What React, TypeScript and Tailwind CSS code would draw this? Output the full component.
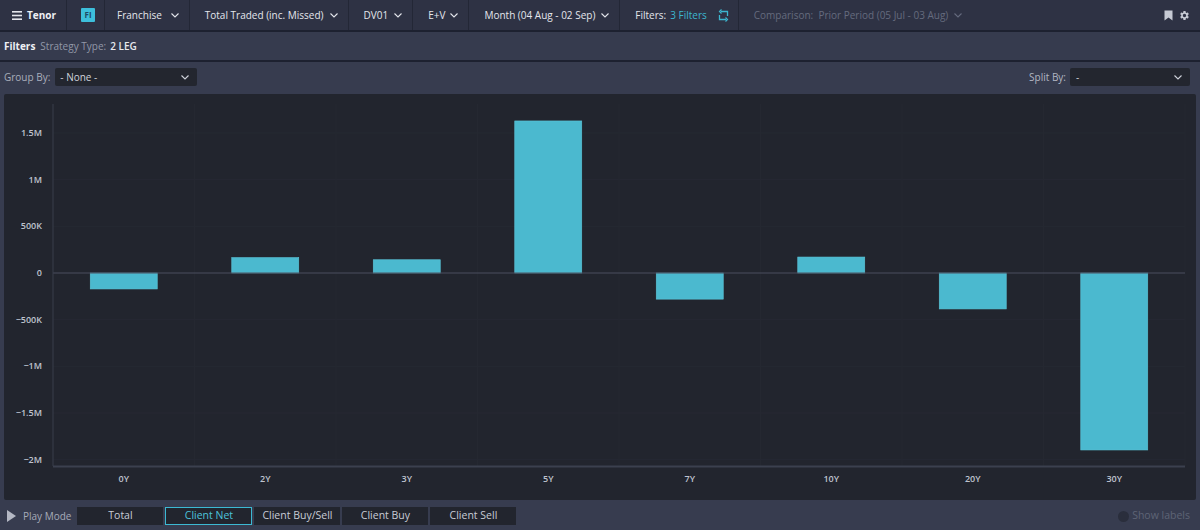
import React from "react";

const Chevron = ({ className = "" }: { className?: string }) => (
  <svg width="8" height="5" viewBox="0 0 8 5" className={className}>
    <polyline points="0.5,0.5 4,4 7.5,0.5" fill="none" stroke="currentColor" strokeWidth="1.1" />
  </svg>
);

const Sep = () => <div className="w-px self-stretch bg-[#232736]" />;

const data: { label: string; v: number }[] = [
  { label: "0Y", v: -171 },
  { label: "2Y", v: 165 },
  { label: "3Y", v: 142 },
  { label: "5Y", v: 1629 },
  { label: "7Y", v: -280 },
  { label: "10Y", v: 171 },
  { label: "20Y", v: -385 },
  { label: "30Y", v: -1896 },
];

const ticks: { label: string; v: number }[] = [
  { label: "1.5M", v: 1500 },
  { label: "1M", v: 1000 },
  { label: "500K", v: 500 },
  { label: "0", v: 0 },
  { label: "\u2212500K", v: -500 },
  { label: "\u22121M", v: -1000 },
  { label: "\u22121.5M", v: -1500 },
  { label: "\u22122M", v: -2000 },
];

function Chart() {
  const left = 49;
  const right = 1181;
  const zeroY = 179;
  const k = 46.67 / 500;
  const catW = (right - left) / 8;
  const barW = 67;
  const y = (v: number) => zeroY - v * k;
  return (
    <svg width="1192" height="406" viewBox="0 0 1192 406" className="block">
      {ticks.map((t) =>
        t.v !== 0 ? (
          <line key={"g" + t.label} x1={left} x2={right} y1={y(t.v)} y2={y(t.v)} stroke="#262933" strokeWidth="1" />
        ) : null
      )}
      {Array.from({ length: 8 }).map((_, i) => (
        <line key={"v" + i} x1={left + catW * (i + 1)} x2={left + catW * (i + 1)} y1={10} y2={372} stroke="#252831" strokeWidth="1" />
      ))}
      {data.map((d, i) => {
        const x = left + catW * i + (catW - barW) / 2;
        const top = d.v >= 0 ? y(d.v) : zeroY;
        const h = Math.abs(d.v * k);
        return <rect key={d.label} x={x} y={top} width={barW} height={h} fill="#4bb9cf" stroke="#5cc6da" strokeWidth="0.6" />;
      })}
      <line x1={left} x2={right} y1={zeroY} y2={zeroY} stroke="#4a4f5e" strokeWidth="1" />
      <line x1={left} x2={left} y1={10} y2={372} stroke="#393e4b" strokeWidth="1" />
      <line x1={left} x2={right} y1={372.5} y2={372.5} stroke="#3b404e" strokeWidth="2" />
      {ticks.map((t) => (
        <text key={t.label} x={38} y={y(t.v) + 3} textAnchor="end" fontSize="9" fontWeight="600" fill="#bfc3cf" fontFamily="'Open Sans', sans-serif">
          {t.label}
        </text>
      ))}
      {data.map((d, i) => (
        <text key={"x" + d.label} x={left + catW * i + catW / 2} y={388} textAnchor="middle" fontSize="9" fontWeight="600" fill="#bfc3cf" fontFamily="'Open Sans', sans-serif">
          {d.label}
        </text>
      ))}
    </svg>
  );
}

export default function App() {
  return (
    <div className="w-[1200px] h-[530px] overflow-hidden bg-[#373c4f] font-['Open_Sans',sans-serif] text-[10px] text-[#e4e6ec] flex flex-col">
      {/* top bar */}
      <div className="h-[32px] shrink-0 bg-[#2e3244] border-b-2 border-[#1d2130] flex items-stretch">
        <div className="flex items-center pl-[12px] pr-[10px] gap-[5px]">
          <svg width="10" height="9" viewBox="0 0 10 9">
            <rect x="0" y="0" width="10" height="1.6" fill="#e4e6ec" />
            <rect x="0" y="3.7" width="10" height="1.6" fill="#e4e6ec" />
            <rect x="0" y="7.4" width="10" height="1.6" fill="#e4e6ec" />
          </svg>
          <span className="font-bold text-[10px] text-[#eef0f4]">Tenor</span>
        </div>
        <Sep />
        <div className="flex items-center pl-[14px] pr-[9px]">
          <div className="w-[14px] h-[14px] bg-[#3dbfdb] rounded-[1px] flex items-center justify-center text-[8px] font-bold text-[#1e4a66] leading-none">FI</div>
        </div>
        <Sep />
        <div className="flex items-center pl-[12px] pr-[10px] gap-[9px]">
          <span>Franchise</span>
          <Chevron />
        </div>
        <Sep />
        <div className="flex items-center pl-[15px] pr-[10px] gap-[6px]">
          <span>Total Traded (inc. Missed)</span>
          <Chevron />
        </div>
        <Sep />
        <div className="flex items-center pl-[15px] pr-[10px] gap-[6px]">
          <span>DV01</span>
          <Chevron />
        </div>
        <Sep />
        <div className="flex items-center pl-[15px] pr-[10px] gap-[5px]">
          <span>E+V</span>
          <Chevron />
        </div>
        <Sep />
        <div className="flex items-center pl-[15px] pr-[10px] gap-[6px]">
          <span>Month (04 Aug - 02 Sep)</span>
          <Chevron />
        </div>
        <Sep />
        <div className="flex items-center pl-[15px] pr-[8px]">
          <span>Filters:</span>
          <span className="ml-[4px] text-[#3db6cf]">3 Filters</span>
          <svg width="13" height="13" viewBox="0 0 13 13" className="ml-[10px]">
            <path d="M4 2.5 H10.5 V7" fill="none" stroke="#3db6cf" strokeWidth="1.3" />
            <path d="M9 10.5 H2.5 V6" fill="none" stroke="#3db6cf" strokeWidth="1.3" />
            <path d="M4.5 0.5 L2.5 2.5 L4.5 4.5" fill="none" stroke="#3db6cf" strokeWidth="1.2" />
            <path d="M8.5 8.5 L10.5 10.5 L8.5 12.5" fill="none" stroke="#3db6cf" strokeWidth="1.2" />
          </svg>
        </div>
        <Sep />
        <div className="flex items-center pl-[15px] gap-[6px] text-[#656b7e]">
          <span>Comparison:&nbsp; Prior Period (05 Jul - 03 Aug)</span>
          <Chevron />
        </div>
        <div className="flex-1" />
        <div className="flex items-center gap-[6px] pr-[10px]">
          <svg width="9" height="11" viewBox="0 0 9 11">
            <path d="M0.5 0.5 H8.5 V10.5 L4.5 7.5 L0.5 10.5 Z" fill="#c6cad4" />
          </svg>
          <svg width="11" height="11" viewBox="0 0 24 24">
            <path
              fill="#c6cad4"
              d="M19.14 12.94c.04-.3.06-.61.06-.94 0-.32-.02-.64-.07-.94l2.030-1.58a.49.49 0 0 0 .12-.61l-1.92-3.32a.488.488 0 0 0-.59-.22l-2.39.96c-.5-.38-1.03-.7-1.62-.94l-.36-2.54a.484.484 0 0 0-.48-.41h-3.84c-.24 0-.43.17-.47.41l-.36 2.54c-.59.24-1.130.57-1.62.94l-2.39-.96c-.22-.08-.47 0-.59.22L2.74 8.87c-.12.21-.08.47.12.61l2.03 1.58c-.05.3-.09.63-.09.94s.02.64.07.94l-2.03 1.58a.49.49 0 0 0-.12.61l1.92 3.32c.12.22.37.29.59.22l2.39-.96c.5.38 1.03.7 1.62.94l.36 2.54c.05.24.24.41.48.41h3.84c.24 0 .44-.17.47-.41l.36-2.54c.59-.24 1.13-.56 1.62-.94l2.39.96c.22.08.47 0 .59-.22l1.92-3.32c.12-.22.07-.47-.12-.61l-2.01-1.58zM12 15.6c-1.98 0-3.6-1.62-3.6-3.6s1.62-3.6 3.6-3.6 3.6 1.62 3.6 3.6-1.62 3.6-3.6 3.6z"
            />
          </svg>
        </div>
      </div>

      {/* filters row */}
      <div className="h-[30px] shrink-0 bg-[#363b4e] border-b-2 border-[#1d2130] flex items-center px-[4px]">
        <span className="font-bold text-[#eef0f4]">Filters</span>
        <span className="ml-[5px] text-[#9298a8]">Strategy Type:</span>
        <span className="ml-[4px] font-semibold text-[#e8eaee]">2 LEG</span>
      </div>

      {/* group by row */}
      <div className="h-[30px] shrink-0 flex items-center justify-between px-[4px] bg-[#373c4f]">
        <div className="flex items-center gap-[5px]">
          <span className="text-[#a9aebb]">Group By:</span>
          <div className="w-[142px] h-[18px] bg-[#23262f] rounded-[2px] flex items-center justify-between pl-[5px] pr-[8px] text-[#d0d3dc]">
            <span>- None -</span>
            <Chevron />
          </div>
        </div>
        <div className="flex items-center gap-[4px] pr-[6px]">
          <span className="text-[#b2b7c3]">Split By:</span>
          <div className="w-[120px] h-[18px] bg-[#23262f] rounded-[2px] flex items-center justify-between pl-[6px] pr-[8px] text-[#d0d3dc]">
            <span>-</span>
            <Chevron />
          </div>
        </div>
      </div>

      {/* chart */}
      <div className="mx-[4px] mt-[2px] h-[406px] shrink-0 bg-[#22252e] rounded-[2px] overflow-hidden">
        <Chart />
      </div>

      {/* bottom */}
      <div className="flex-1 flex items-center pl-[7px] pr-[10px] pt-[2px]">
        <svg width="9" height="12" viewBox="0 0 9 12">
          <path d="M0 0 L9 6 L0 12 Z" fill="#b4b8c4" />
        </svg>
        <span className="ml-[7px] text-[#a6abb8] text-[10px]">Play Mode</span>
        <div className="ml-[6px] flex gap-[2px]">
          {["Total", "Client Net", "Client Buy/Sell", "Client Buy", "Client Sell"].map((b) => (
            <div
              key={b}
              className={
                b === "Client Net"
                  ? "w-[87px] h-[18px] bg-[#22252e] border border-[#3cb9d3] text-[#4cc3dc] flex items-center justify-center text-[10.5px]"
                  : "w-[86px] h-[18px] bg-[#22252e] text-[#c8ccd6] flex items-center justify-center text-[10.5px]"
              }
            >
              {b}
            </div>
          ))}
        </div>
        <div className="flex-1" />
        <div className="flex items-center gap-[3px]">
          <div className="w-[11px] h-[11px] rounded-full bg-[#2a2e3c]" />
          <span className="text-[#5e6476] text-[10.5px]">Show labels</span>
        </div>
      </div>
    </div>
  );
}
